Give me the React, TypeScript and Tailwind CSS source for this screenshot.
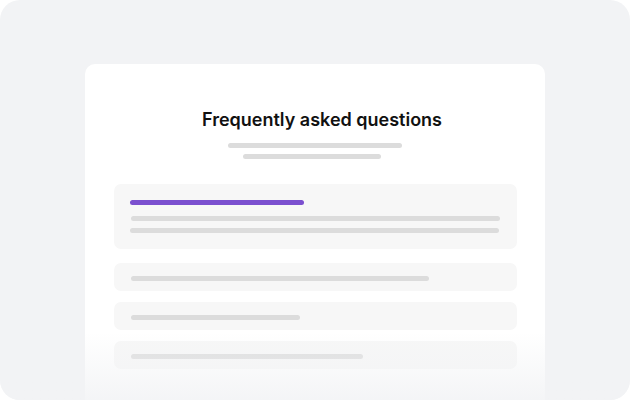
import React from 'react';

const Bar = ({ className }: { className: string }) => (
  <div className={`h-[5px] rounded-full ${className}`} />
);

// widths of the placeholder lines in the collapsed rows
const collapsed = [298, 169, 232];

const App = () => {
  return (
    <div className="w-[630px] h-[400px] bg-white">
      <div
        className="relative w-[630px] h-[400px] bg-[#f2f3f5] rounded-[20px] overflow-hidden flex justify-center pt-[64px]"
        style={{ fontFamily: 'Inter, "Noto Sans", sans-serif' }}
      >
        <div className="w-[460px] h-[400px] bg-white rounded-[10px] pl-[29px] pr-[28px] pt-[44px] flex flex-col">
          <h1 className="pl-[13px] text-center text-[18px] leading-[24px] font-semibold text-[#111111]">
            Frequently asked questions
          </h1>
          <div className="flex flex-col items-center gap-[6px] mt-[11px]">
            <Bar className="w-[174px] mr-px bg-[#dcdcdc]" />
            <Bar className="w-[138px] mr-[7px] bg-[#dcdcdc]" />
          </div>

          <div className="mt-[25px] bg-[#f7f7f7] rounded-[7px] pt-[16px] pb-[16px] px-[16px]">
            <Bar className="w-[174px] bg-[#7b50cf]" />
            <Bar className="w-[369px] ml-px mt-[11px] bg-[#dcdcdc]" />
            <Bar className="w-[369px] mt-[7px] bg-[#dcdcdc]" />
          </div>

          <div className="mt-[14px] flex flex-col gap-[11px]">
            {collapsed.map((w, i) => (
              <div key={i} className="bg-[#f7f7f7] rounded-[7px] h-[28px] pt-[13px] px-[17px]">
                <div className="h-[5px] rounded-full bg-[#dcdcdc]" style={{ width: w }} />
              </div>
            ))}
          </div>
        </div>

        <div className="absolute left-0 right-0 bottom-0 h-[68px] bg-gradient-to-b from-[#f2f3f5]/0 to-[#f2f3f5]/85" />
      </div>
    </div>
  );
};

export default App;
